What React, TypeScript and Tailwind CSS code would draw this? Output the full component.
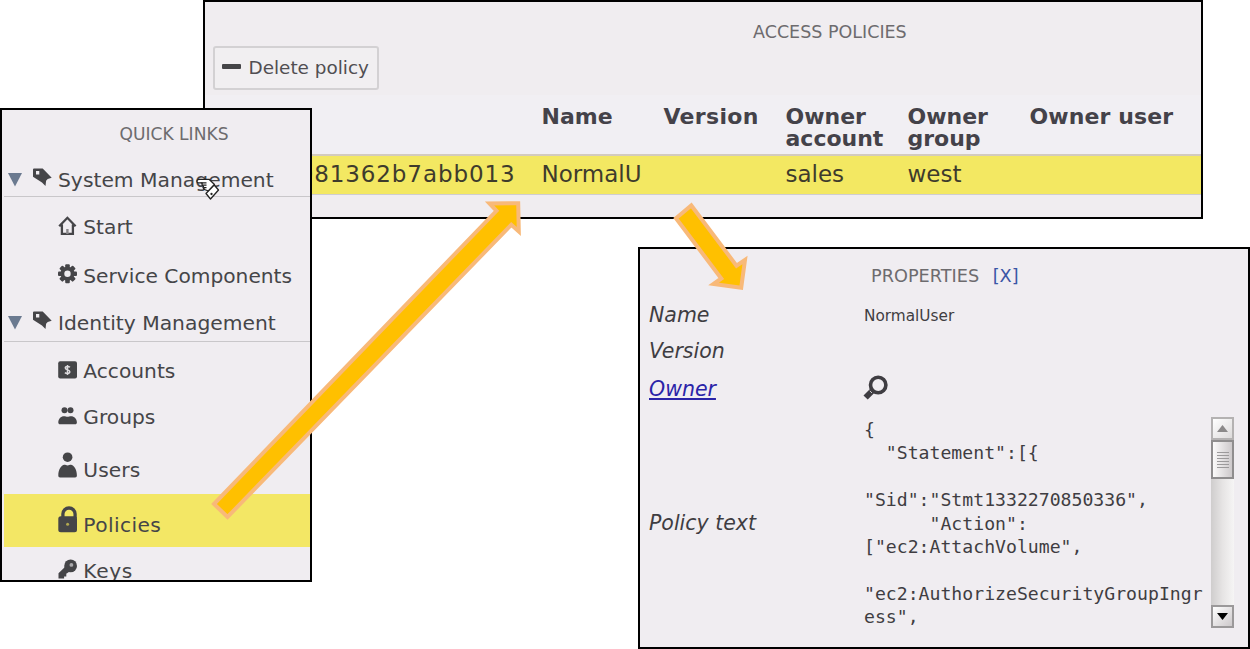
import type { ReactNode } from "react";

const INK = "#454548";

function Glyph({ children }: { children: ReactNode }) {
  return (
    <svg width="19" height="26" viewBox="0 0 19 26" className="block shrink-0 overflow-visible" fill={INK}>
      {children}
    </svg>
  );
}

const HomeIcon = () => (
  <Glyph>
    <path d="M1.2 12.3 9.4 3.8l8.2 8.5M3.9 10.5v9.3h11v-9.3" fill="none" stroke={INK} strokeWidth="2.3" />
    <path d="M8.2 15h2.4v5H8.2z" fill="#8b898c" />
  </Glyph>
);

const GearIcon = () => (
  <Glyph>
    <g transform="translate(9.5 10.7)">
      {[0, 45, 90, 135].map((a) => (
        <rect key={a} x="-2.3" y="-9.5" width="4.6" height="19" rx="1" transform={`rotate(${a})`} />
      ))}
      <circle r="7" />
      <circle r="3.2" fill="#efedf0" />
    </g>
  </Glyph>
);

const AccountIcon = () => (
  <Glyph>
    <rect x="0.2" y="3.2" width="18.8" height="17.4" rx="2" />
    <path
      d="M12 9.3c-.8-.7-1.6-.9-2.5-.9-1.3 0-2.2.6-2.2 1.6 0 2.4 4.5 1.300 4.5 3.8 0 1-1 1.700-2.3 1.700-1 0-1.900-.3-2.600-.9M9.500 7v10"
      fill="none"
      stroke="#dddbde"
      strokeWidth="1.5"
    />
  </Glyph>
);

const GroupIcon = () => (
  <Glyph>
    <circle cx="6.5" cy="6.3" r="3" />
    <circle cx="12.5" cy="6.3" r="3" />
    <path d="M.3 18.500c0-3.800 2.500-6.300 5.700-6.300 1.500 0 2.200.6 3.500.6s2-.6 3.500-.6c3.200 0 5.900 2.500 5.900 6.300 0 1.200-.7 1.800-1.800 1.800H2.100c-1.100 0-1.800-.6-1.800-1.800z" />
  </Glyph>
);

const UserIcon = () => (
  <Glyph>
    <circle cx="9.6" cy="0.2" r="4.8" />
    <path d="M.3 18.500c0-6 3-10.500 6-10.700 1.200 0 2 .7 3.300.7s2.100-.7 3.300-.7c3 .2 6 4.700 6 10.700 0 1.300-.6 2-1.800 2h-15c-1.200 0-1.800-.7-1.800-2z" />
  </Glyph>
);

const LockIcon = () => (
  <Glyph>
    <path d="M4.9 6V2.100a6.100 6.100 0 0 1 12.200 0V6" fill="none" stroke={INK} strokeWidth="3.300" />
    <rect x="0.3" y="4.3" width="18.700" height="16" rx="2.500" />
    <circle cx="9.600" cy="12.200" r="1.500" fill="#b3a950" />
  </Glyph>
);

const KeyIcon = () => (
  <Glyph>
    <path d="M7.500 9.500 1.300 15.500v4.300h4v-2.200h2.200v-2.200l3.500-2.500z" stroke={INK} strokeWidth="1.600" />
    <circle cx="12.600" cy="7.900" r="6.400" />
    <circle cx="13.400" cy="6.900" r="1.900" fill="#aaa9ac" />
  </Glyph>
);

const TagIcon = () => (
  <Glyph>
    <path
      fillRule="evenodd"
      d="M0 2.500q0-1 1-1h8.700l9 9.300-4 1.200-1.600 1.800-.6 5.200L9 15.500 0 9.800zM3 4v3.400h3.300V4z"
    />
  </Glyph>
);

function Section({ label, className }: { label: string; className: string }) {
  return (
    <div className={`ml-[2px] flex items-center border-b border-[#c9c7ca] pl-1 ${className}`}>
      <svg width="14" height="26" viewBox="0 0 14 26" className="block shrink-0">
        <path d="M0 6h14L7 19.500z" fill="#6b7a90" />
      </svg>
      <div className="ml-[11px] flex">
        <TagIcon />
      </div>
      <span className="ml-[6px] pt-px text-[20.3px]">{label}</span>
    </div>
  );
}

function Item({ label, icon, className }: { label: string; icon: ReactNode; className: string }) {
  return (
    <div className={`ml-[2px] flex shrink-0 items-center pl-[54px] text-[20.2px] ${className}`}>
      {icon}
      <span className="ml-[6.300px] pt-px">{label}</span>
    </div>
  );
}

function QuickLinks() {
  return (
    <section className="absolute left-0 top-[108px] flex h-[474px] w-[312px] flex-col overflow-hidden border-2 border-black bg-[#f0edf1] leading-none text-[#454548]">
      <h2 className="flex h-[48px] shrink-0 items-center pl-[117.500px] pt-[2px] text-[17.1px] text-[#6d6b6e]">QUICK LINKS</h2>
      <Section label="System Management" className="h-[39px] shrink-0 pt-[5px]" />
      <Item label="Start" icon={<HomeIcon />} className="h-[60px]" />
      <Item label="Service Components" icon={<GearIcon />} className="h-[38px]" />
      <Section label="Identity Management" className="h-[47px] shrink-0 pt-[10px]" />
      <Item label="Accounts" icon={<AccountIcon />} className="h-[58px]" />
      <Item label="Groups" icon={<GroupIcon />} className="h-[33px]" />
      <Item label="Users" icon={<UserIcon />} className="h-[61px] pt-[12px] tracking-[0.100px]" />
      <Item label="Policies" icon={<LockIcon />} className="h-[53px] bg-[#f3e765] pt-[8px] tracking-[0.400px]" />
      <Item label="Keys" icon={<KeyIcon />} className="h-[48px] tracking-[0.600px]" />
    </section>
  );
}

function AccessPolicies() {
  return (
    <section className="absolute left-[203px] top-0 flex h-[219px] w-[1000px] flex-col overflow-hidden border-2 border-black bg-[#f0edf0] leading-none">
      <h2 className="flex h-[44px] shrink-0 items-center pl-[548px] pt-[18px] text-[17.5px] text-[#6d6b6e]">
        ACCESS POLICIES
      </h2>
      <div className="flex h-[49px] shrink-0 pl-2">
        <button className="flex h-[44px] w-[166px] items-center rounded-[3px] border-2 border-[#d3d1d3] bg-[#f1eff1] pl-[7px] text-[18.4px] text-[#504e52]">
          <span className="mb-[4px] h-[5px] w-[19px] rounded-[1px] bg-[#454548]" />
          <span className="ml-[7.500px]">Delete policy</span>
        </button>
      </div>
      <div className="grid h-[61px] shrink-0 grid-cols-[336.500px_122px_122px_122px_122px_1fr] border-b-2 border-[#d3cbbd] bg-[#f1eff3] pt-[11px] text-[22px] font-bold leading-[22px] text-[#444249]">
        <span />
        <span>Name</span>
        <span className="tracking-[0.300px]">Version</span>
        <span>Owner account</span>
        <span>Owner group</span>
        <span className="tracking-[0.100px]">Owner user</span>
      </div>
      <div className="grid h-[39px] shrink-0 grid-cols-[336.500px_100px_144px_122px_122px_1fr] items-center border-b border-[#cfcdd0] bg-[#f3e862] text-[23px] leading-[34px] text-[#3e3b2c]">
        <span className="-mt-[2px] pr-[26px] text-right tracking-[0.900px]">981362b7abb013</span>
        <span className="-mt-[2px]">NormalU</span>
        <span />
        <span className="-mt-[2px]">sales</span>
        <span className="-mt-[2px]">west</span>
        <span />
      </div>
    </section>
  );
}

const POLICY = `{
  "Statement":[{

"Sid":"Stmt1332270850336",
      "Action":
["ec2:AttachVolume",

"ec2:AuthorizeSecurityGroupIngr
ess",`;

function ScrollBar() {
  return (
    <div className="flex h-[211px] w-[23px] shrink-0 flex-col bg-linear-to-r from-[#cfcdcd] via-[#e6e4e4] to-[#f6f5f5]">
      <div className="flex h-[23px] items-center justify-center border-2 border-[#b4b2b2] bg-linear-to-br from-white to-[#dddbdb]">
        <svg width="11" height="7" viewBox="0 0 11 7">
          <path d="M0 7 5.500 0 11 7z" fill="#8b8989" />
        </svg>
      </div>
      <div className="flex h-[39px] flex-col items-center justify-center gap-[2px] border-2 border-[#8f8d8e] bg-linear-to-r from-[#fbfafa] to-[#cdc9cb]">
        {[0, 1, 2, 3, 4, 5].map((n) => (
          <span key={n} className="h-px w-[12px] bg-[#9c9a9b]" />
        ))}
      </div>
      <div className="flex-1" />
      <div className="flex h-[23px] items-center justify-center border-2 border-[#9b999a] bg-linear-to-br from-white to-[#cdc9cb]">
        <svg width="11" height="7" viewBox="0 0 11 7">
          <path d="M0 0h11L5.500 7z" fill="#000" />
        </svg>
      </div>
    </div>
  );
}

function Properties() {
  return (
    <section className="absolute left-[638px] top-[247px] flex h-[402px] w-[612px] flex-col overflow-hidden border-2 border-black bg-[#f0edf1] leading-none text-[#3f3d42]">
      <h2 className="flex h-[48px] shrink-0 items-center pl-[231px] pt-[7px] text-[17.7px] text-[#6d6b6e]">
        PROPERTIES
        <span className="ml-[13.500px] text-[#3a56a6]">[X]</span>
      </h2>
      <div className="grid grid-cols-[215px_1fr] grid-rows-[36px_36px_38px_231px] items-center pl-[9px] text-[20.5px]">
        <span className="pt-px italic">Name</span>
        <span className="pt-[3px] text-[15.3px]">NormalUser</span>
        <span className="pt-px italic">Version</span>
        <span />
        <span className="pt-[2px] italic text-[#2a24a8] underline decoration-2 underline-offset-2">Owner</span>
        <svg width="25" height="26" viewBox="0 0 25 26" className="-ml-[1.500px] block" fill="none" stroke="#3f3d42">
          <circle cx="15.200" cy="10" r="7.700" strokeWidth="3.600" />
          <path d="m9.600 15.500-7 7" strokeWidth="6" />
          <path d="m6.800 15.800 2.200 2.200" strokeWidth="0.800" stroke="#f0edf1" />
        </svg>
        <span className="pt-[2px] italic">Policy text</span>
        <div className="flex">
          <pre className="h-[211px] w-[347px] overflow-hidden pt-px font-['DejaVu_Sans_Mono',monospace] text-[18.15px] leading-[23.400px]">
            {POLICY}
          </pre>
          <ScrollBar />
        </div>
      </div>
    </section>
  );
}

export default function App() {
  return (
    <main className="relative h-[649px] w-[1250px] overflow-hidden bg-white font-['DejaVu_Sans',sans-serif]">
      <AccessPolicies />
      <QuickLinks />
      <Properties />
      <svg className="absolute left-0 top-0" width="1250" height="649" viewBox="0 0 1250 649">
        <g fill="#ffc000" stroke="#f8b979" strokeWidth="4">
          <path d="M214 504 496.500 210.800 489.500 203.500 518.200 203.300 518.800 231.500 511.300 224.800 227.500 517z" />
          <path d="M676 218.300 691.300 205.500 736.500 265.700 745 260 741.200 287.800 713.500 284 721.300 278.500z" />
        </g>
        <g transform="translate(196 178)" fill="#fff" stroke="#222" strokeWidth="1.300" strokeLinejoin="round">
          <path d="M1 3.300C1 2 2 1.300 3.500 1.300h9.500l5.500 5.200-6 6.500-4-1.500-1.500-2 .5-1.300-1.500-1 .3-1.500-1.300-1L6 4.800H3C1.800 4.800 1 4.300 1 3.300z" />
          <path d="M6 4.800h4.500M6.500 7.200h4M7.500 9.700h3" fill="none" />
          <path d="m10 15.500 8.200-8.500 4.300 5-8 9z" />
          <circle cx="15.500" cy="16" r="0.500" fill="#222" />
        </g>
      </svg>
    </main>
  );
}
